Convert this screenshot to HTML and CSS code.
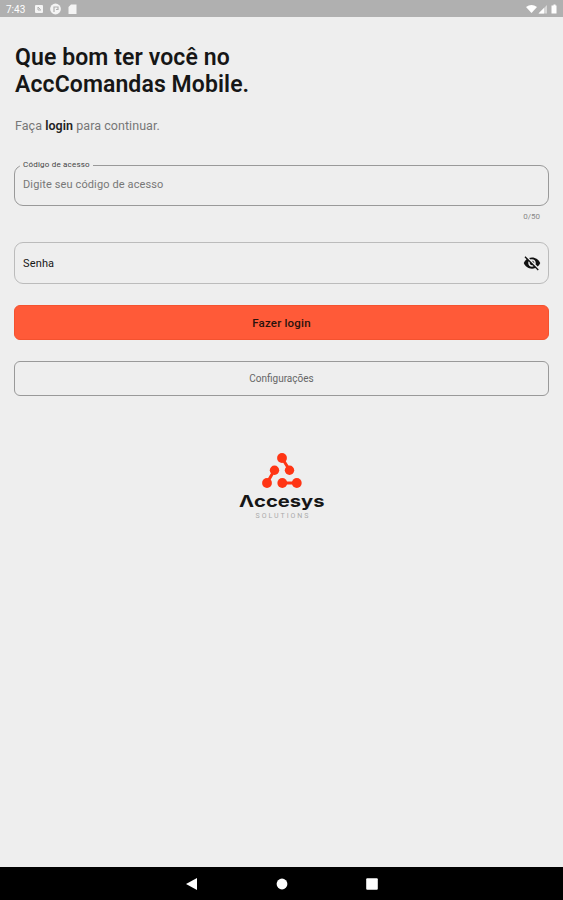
FILE: index.html
```html
<!DOCTYPE html>
<html lang="pt-BR">
<head>
<meta charset="UTF-8" />
<meta name="viewport" content="width=device-width, initial-scale=1" />
<title>AccComandas Mobile</title>
<link rel="stylesheet" href="styles.css">
</head>
<body>

<header class="status-bar">
  <span class="time">7:43</span>
  <svg class="status-left" width="46" height="12" viewBox="0 0 46 12">
    <rect x="1" y="2" width="8" height="8" rx="1" fill="#f4f4f4" />
    <path d="M4 4v3h3M4 4l2.5 2.5" stroke="#b0b0b0" fill="none" />
    <circle cx="21.5" cy="6" r="5.4" fill="#f4f4f4" />
    <path d="M20 9V4h4v2.5h-2" stroke="#b0b0b0" stroke-width="1.2" fill="none" />
    <path d="M37 1.5h5.5V11H34.500V4z" fill="#f4f4f4" />
  </svg>
  <svg class="status-right" width="34" height="12" viewBox="0 0 34 12">
    <path d="M0 4Q5.500 0 11 4L5.500 10z" fill="#fff" />
    <path d="M21 2v8.500h-8.500z" fill="#d8d8d8" />
    <path d="M18 5v5.500h-5.500z" fill="#fff" />
    <path d="M27.500 1.500h2V2.500h1V10.500h-5V2.500h2z" fill="#fff" />
  </svg>
</header>

<main>
  <h1>Que bom ter você no<br>AccComandas Mobile.</h1>
  <p class="subtitle">Faça <b>login</b> para continuar.</p>

  <fieldset class="field field-code">
    <legend>Código de acesso</legend>
    <span class="placeholder">Digite seu código de acesso</span>
  </fieldset>
  <div class="counter">0/50</div>

  <div class="field field-password">
    <span>Senha</span>
    <svg width="18" height="18" viewBox="0 0 24 24">
      <path fill="#111" d="M12 7c2.760 0 5 2.240 5 5 0 .65-.13 1.260-.36 1.830l2.920 2.920c1.510-1.260 2.700-2.890 3.430-4.750-1.730-4.390-6-7.500-11-7.500-1.400 0-2.740.25-3.980.7l2.160 2.160C10.740 7.130 11.350 7 12 7zM2 4.270l2.280 2.280.46.46C3.080 8.300 1.780 10.020 1 12c1.730 4.390 6 7.500 11 7.500 1.550 0 3.030-.3 4.380-.84l.42.42L19.730 22 21 20.730 3.270 3 2 4.270zM7.530 9.800l1.550 1.550c-.05.21-.08.43-.08.65 0 1.660 1.340 3 3 3 .22 0 .44-.03.65-.08l1.550 1.550c-.67.33-1.410.53-2.200.53-2.760 0-5-2.240-5-5 0-.79.2-1.530.53-2.200zm4.310-.78l3.150 3.150.02-.16c0-1.660-1.340-3-3-3l-.17.01z" />
    </svg>
  </div>

  <button class="btn btn-login">Fazer login</button>
  <button class="btn btn-config">Configurações</button>

  <svg class="logo" width="90" height="70" viewBox="0 0 90 70">
    <g stroke="#ff3514" stroke-width="3" fill="#ff3514">
      <path d="M45 8L52.500 20M37.500 20L30 33M45 33H59.500" />
      <g stroke="none">
        <circle cx="45" cy="8" r="4.900" />
        <circle cx="52.500" cy="20.300" r="4.700" />
        <circle cx="37.500" cy="20.300" r="4.700" />
        <circle cx="30" cy="33" r="4.900" />
        <circle cx="45.300" cy="33" r="4.900" />
        <circle cx="59.800" cy="33" r="4.900" />
      </g>
    </g>
    <text class="logo-name" x="2" y="56.500" textLength="85.500" lengthAdjust="spacingAndGlyphs">Λccesys</text>
    <text class="logo-sub" x="18.500" y="67.500" textLength="53">SOLUTIONS</text>
  </svg>
</main>

<footer class="nav-bar">
  <svg width="14" height="14" viewBox="0 0 14 14"><path d="M1 7L12 1v12z" fill="#fff" /></svg>
  <svg width="14" height="14" viewBox="0 0 14 14"><circle cx="7" cy="7" r="5.400" fill="#fff" /></svg>
  <svg width="14" height="14" viewBox="0 0 14 14"><rect x="1.200" y="1.200" width="11.600" height="11.600" rx="1" fill="#fff" /></svg>
</footer>

</body>
</html>
```
FILE: styles.css
```css
* {
  box-sizing: border-box;
}
body {
  margin: 0;
  height: 100vh;
  display: flex;
  flex-direction: column;
  font-family: Roboto, "Liberation Sans", sans-serif;
  background: #eeeeee;
  color: #161616;
  overflow: hidden;
}
.status-bar {
  height: 17px;
  background: #b0b0b0;
  display: flex;
  align-items: center;
  padding: 1px 3px 0 6px;
}
.time {
  width: 28px;
  font-size: 10px;
  color: #fff;
}
.status-right {
  margin-left: auto;
}
main {
  flex: 1;
  display: flex;
  flex-direction: column;
  padding: 27px 14px 0;
}
h1 {
  margin: 0 0 0 1px;
  font-size: 23px;
  line-height: 27px;
  font-weight: 600;
  letter-spacing: 0.1px;
}
.subtitle {
  margin: 20px 0 0;
  padding-left: 1px;
  font-size: 12.5px;
  line-height: 16px;
  color: #777;
  letter-spacing: 0.05px;
}
.subtitle b {
  color: #222;
  font-weight: 600;
}
.field {
  border: 1px solid #999;
  border-radius: 9px;
  margin: 0;
  padding: 0 8px;
  font-size: 11px;
}
.field-code {
  height: 46px;
  margin-top: 26px;
}
.field-code legend {
  margin-left: -3px;
  padding: 0 3px;
  font-size: 8px;
  line-height: 10px;
  color: #444;
  letter-spacing: 0.2px;
}
.placeholder {
  display: block;
  margin-top: 8px;
  line-height: 14px;
  color: #777;
  letter-spacing: 0.12px;
}
.counter {
  margin-top: 6px;
  padding-right: 9px;
  text-align: right;
  font-size: 8px;
  line-height: 10px;
  color: #888;
}
.field-password {
  height: 42px;
  margin-top: 20px;
  padding-right: 7px;
  border-color: #bbb;
  letter-spacing: 0.15px;
  display: flex;
  align-items: center;
  justify-content: space-between;
}
.btn {
  height: 35px;
  border-radius: 6px;
  font-family: inherit;
  padding: 0;
}
.btn-login {
  margin-top: 21px;
  background: #ff5a38;
  border: 1px solid #f4522f;
  color: #2b120c;
  font-size: 11.5px;
  font-weight: 500;
  letter-spacing: 0.2px;
}
.btn-config {
  margin-top: 21px;
  background: none;
  border: 1px solid #999;
  color: #666;
  font-size: 10px;
}
.logo {
  align-self: center;
  margin-top: 54px;
}
.logo-name {
  font-family: Inter, sans-serif;
  font-size: 16.5px;
  font-weight: 700;
  fill: #161616;
}
.logo-sub {
  font-size: 7px;
  fill: #aaa;
}
.nav-bar {
  height: 33px;
  background: #000;
  display: flex;
  align-items: center;
  justify-content: center;
  gap: 76px;
}
```
